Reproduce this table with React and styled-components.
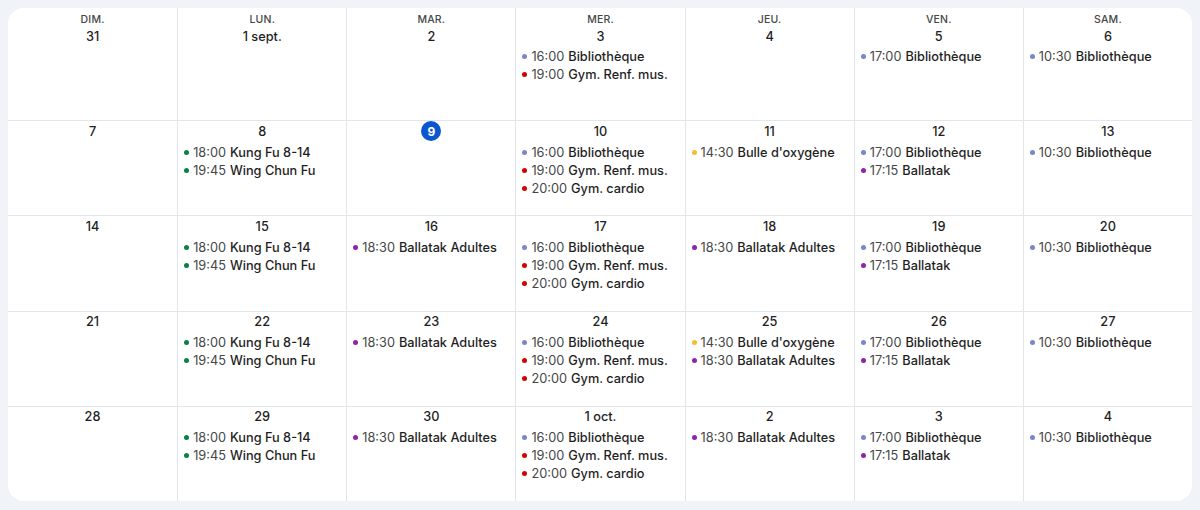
import { createGlobalStyle } from "styled-components";
import styled from "styled-components";

const GlobalStyle = createGlobalStyle`
  html, body {
    margin: 0;
    padding: 0;
    background: #f0f4f9;
  }
  body {
    font-family: Inter, Roboto, "Noto Sans", Arial, sans-serif;
  }
`;

const Page = styled.div`
  padding: 8px;
  background: #f0f4f9;
`;

const Card = styled.div`
  background: #fff;
  border-radius: 16px;
  height: 493px;
  overflow: hidden;
  display: grid;
  grid-template-columns: repeat(7, 1fr);
  grid-template-rows: 112px repeat(4, 1fr);
`;

const Cell = styled.div`
  border-left: ${(p) => (p.$first ? "none" : "1px solid #e2e5ea")};
  border-top: ${(p) => (p.$top ? "none" : "1px solid #e2e5ea")};
  padding-top: ${(p) => (p.$top ? "6px" : "0")};
  display: flex;
  flex-direction: column;
  min-width: 0;
`;

const DayName = styled.div`
  text-align: center;
  font-size: 10.5px;
  line-height: 12px;
  font-weight: 500;
  color: #444746;
  letter-spacing: 0.2px;
`;

const DateLine = styled.div`
  display: flex;
  justify-content: center;
  align-items: center;
  height: 20px;
  margin-bottom: ${(p) => (p.$top ? "1px" : "2px")};
`;

const DateNum = styled.span`
  display: inline-flex;
  align-items: center;
  justify-content: center;
  font-size: 12.75px;
  font-weight: 500;
  color: ${(p) => (p.$today ? "#fff" : "#1f1f1f")};
  background: ${(p) => (p.$today ? "#0b57d0" : "transparent")};
  min-width: 20px;
  height: 20px;
  border-radius: 50%;
  ${(p) => (p.$today ? "font-weight: 700; font-size: 12px;" : "")}
`;

const Event = styled.div`
  display: flex;
  align-items: center;
  gap: 4px;
  padding: 0 8px 0 6px;
  height: 18px;
  font-size: 12.75px;
  white-space: nowrap;
  overflow: hidden;
`;

const Dot = styled.span`
  flex: none;
  width: 5px;
  height: 5px;
  border-radius: 50%;
  background: ${(p) => p.$color};
`;

const Time = styled.span`
  color: #444746;
`;

const Title = styled.span`
  color: #1f1f1f;
  font-weight: 500;
  margin-left: 4px;
`;

const C = {
  lav: "#7986cb",
  red: "#d50000",
  green: "#0b8043",
  yellow: "#f6bf26",
  grape: "#8e24aa",
};

const bib = (t) => [C.lav, t, "Bibliothèque"];
const kung = [
  [C.green, "18:00", "Kung Fu 8-14"],
  [C.green, "19:45", "Wing Chun Fu"],
];
const wed = [bib("16:00"), [C.red, "19:00", "Gym. Renf. mus."], [C.red, "20:00", "Gym. cardio"]];
const fri = [bib("17:00"), [C.grape, "17:15", "Ballatak"]];
const adults = [C.grape, "18:30", "Ballatak Adultes"];

const days = ["DIM.", "LUN.", "MAR.", "MER.", "JEU.", "VEN.", "SAM."];

const weeks = [
  [
    ["31", []],
    ["1 sept.", []],
    ["2", []],
    ["3", wed.slice(0, 2)],
    ["4", []],
    ["5", [bib("17:00")]],
    ["6", [bib("10:30")]],
  ],
  [
    ["7", []],
    ["8", kung],
    ["9", [], true],
    ["10", wed],
    ["11", [[C.yellow, "14:30", "Bulle d'oxygène"]]],
    ["12", fri],
    ["13", [bib("10:30")]],
  ],
  [
    ["14", []],
    ["15", kung],
    ["16", [adults]],
    ["17", wed],
    ["18", [adults]],
    ["19", fri],
    ["20", [bib("10:30")]],
  ],
  [
    ["21", []],
    ["22", kung],
    ["23", [adults]],
    ["24", wed],
    ["25", [[C.yellow, "14:30", "Bulle d'oxygène"], adults]],
    ["26", fri],
    ["27", [bib("10:30")]],
  ],
  [
    ["28", []],
    ["29", kung],
    ["30", [adults]],
    ["1 oct.", wed],
    ["2", [adults]],
    ["3", fri],
    ["4", [bib("10:30")]],
  ],
];

export default function App() {
  return (
    <Page>
      <GlobalStyle />
      <Card>
        {weeks.map((week, wi) =>
          week.map(([label, events, today], di) => (
            <Cell key={`${wi}-${di}`} $first={di === 0} $top={wi === 0}>
              {wi === 0 && <DayName>{days[di]}</DayName>}
              <DateLine $top={wi === 0}>
                <DateNum $today={today}>{label}</DateNum>
              </DateLine>
              {events.map(([color, time, title], i) => (
                <Event key={i}>
                  <Dot $color={color} />
                  <span>
                    <Time>{time}</Time>
                    <Title>{title}</Title>
                  </span>
                </Event>
              ))}
            </Cell>
          ))
        )}
      </Card>
    </Page>
  );
}
